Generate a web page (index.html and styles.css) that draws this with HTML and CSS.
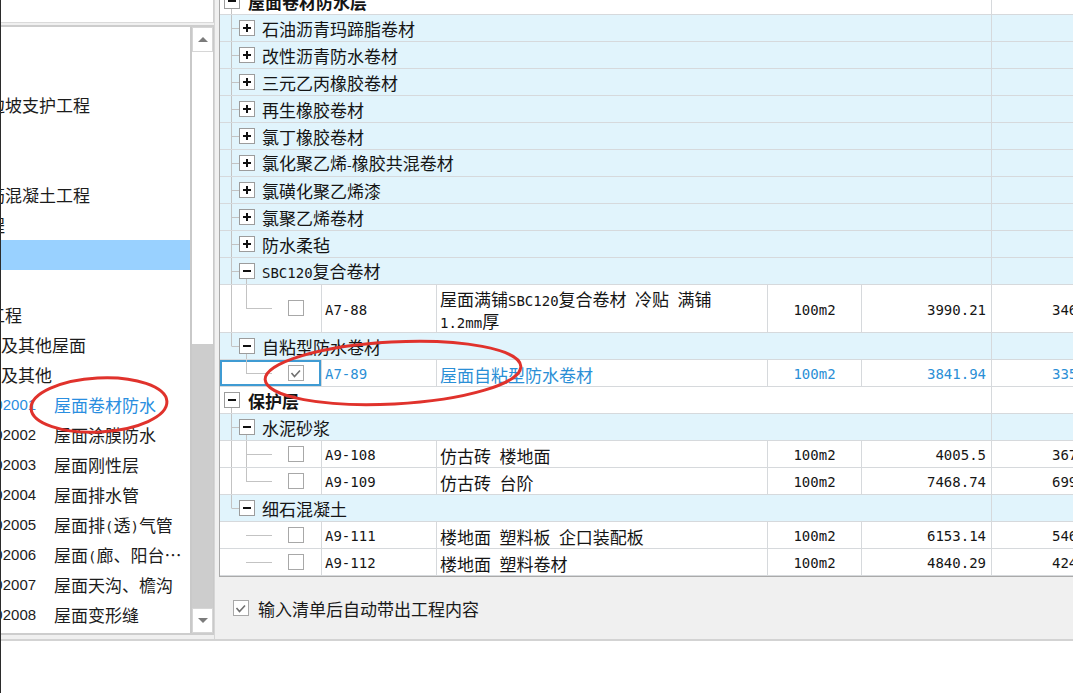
FILE: index.html
```html
<!DOCTYPE html>
<html lang="zh-CN">
<head>
<meta charset="utf-8">
<title>清单</title>
<link rel="stylesheet" href="styles.css">
</head>
<body>
<div class="app">
  <div class="main">
    <aside class="left">
      <div class="topbox"></div>
      <div class="listpanel">
        <div class="list">
          <div class="list-inner">
            <div class="li l0">建筑工程</div>
            <div class="li l1">土石方工程</div>
            <div class="li l1">地基处理与边坡支护工程</div>
            <div class="li l1">桩基工程</div>
            <div class="li l1">砌筑工程</div>
            <div class="li l1">混凝土及钢筋混凝土工程</div>
            <div class="li l1">金属结构工程</div>
            <div class="li l1 hover">木结构工程</div>
            <div class="li l1">门窗工程</div>
            <div class="li l1">屋面及防水工程</div>
            <div class="li l2">瓦、型材及其他屋面</div>
            <div class="li l2">屋面防水及其他</div>
            <div class="li l3 cur"><span class="code">010902001</span><span class="name">屋面卷材防水</span></div>
            <div class="li l3"><span class="code">010902002</span><span class="name">屋面涂膜防水</span></div>
            <div class="li l3"><span class="code">010902003</span><span class="name">屋面刚性层</span></div>
            <div class="li l3"><span class="code">010902004</span><span class="name">屋面排水管</span></div>
            <div class="li l3"><span class="code">010902005</span><span class="name">屋面排<span class="p">(</span>透<span class="p">)</span>气管</span></div>
            <div class="li l3"><span class="code">010902006</span><span class="name">屋面<span class="p">(</span>廊、阳台<span class="p">)</span>泄<span class="p">(</span>吐<span class="p">)</span>水管</span></div>
            <div class="li l3"><span class="code">010902007</span><span class="name">屋面天沟、檐沟</span></div>
            <div class="li l3"><span class="code">010902008</span><span class="name">屋面变形缝</span></div>
          </div>
        </div>
        <div class="vscroll">
          <div class="sb-btn"><span class="tri-up"></span></div>
          <div class="sb-thumb"></div>
          <div class="sb-track"></div>
          <div class="sb-btn"><span class="tri-down"></span></div>
        </div>
      </div>
    </aside>
    <div class="split"></div>
    <section class="right">
      <div class="grid">
        <div class="grid-inner">
          <!-- 屋面卷材防水层 -->
          <div class="row g1">
            <div class="cell-main">
              <svg class="tree" width="28" height="26"><path class="tl" d="M11.5 21V26"/><rect class="bx" x="4.5" y="5.5" width="15" height="15"/><path class="sg" d="M8 13H16"/></svg>
              <span class="label">屋面卷材防水层</span>
            </div>
            <div class="cell-end"></div>
          </div>
          <div class="row g2">
            <div class="cell-main">
              <svg class="tree" width="42" height="26"><path class="tl" d="M11.5 0V26M12 13.5H19"/><rect class="bx" x="19.5" y="5.5" width="15" height="15"/><path class="sg" d="M23 13H31M27 9V17"/></svg>
              <span class="label">石油沥青玛蹄脂卷材</span>
            </div>
            <div class="cell-end"></div>
          </div>
          <div class="row g2">
            <div class="cell-main">
              <svg class="tree" width="42" height="26"><path class="tl" d="M11.5 0V26M12 13.5H19"/><rect class="bx" x="19.5" y="5.5" width="15" height="15"/><path class="sg" d="M23 13H31M27 9V17"/></svg>
              <span class="label">改性沥青防水卷材</span>
            </div>
            <div class="cell-end"></div>
          </div>
          <div class="row g2">
            <div class="cell-main">
              <svg class="tree" width="42" height="26"><path class="tl" d="M11.5 0V26M12 13.5H19"/><rect class="bx" x="19.5" y="5.5" width="15" height="15"/><path class="sg" d="M23 13H31M27 9V17"/></svg>
              <span class="label">三元乙丙橡胶卷材</span>
            </div>
            <div class="cell-end"></div>
          </div>
          <div class="row g2">
            <div class="cell-main">
              <svg class="tree" width="42" height="26"><path class="tl" d="M11.5 0V26M12 13.5H19"/><rect class="bx" x="19.5" y="5.5" width="15" height="15"/><path class="sg" d="M23 13H31M27 9V17"/></svg>
              <span class="label">再生橡胶卷材</span>
            </div>
            <div class="cell-end"></div>
          </div>
          <div class="row g2">
            <div class="cell-main">
              <svg class="tree" width="42" height="26"><path class="tl" d="M11.5 0V26M12 13.5H19"/><rect class="bx" x="19.5" y="5.5" width="15" height="15"/><path class="sg" d="M23 13H31M27 9V17"/></svg>
              <span class="label">氯丁橡胶卷材</span>
            </div>
            <div class="cell-end"></div>
          </div>
          <div class="row g2">
            <div class="cell-main">
              <svg class="tree" width="42" height="26"><path class="tl" d="M11.5 0V26M12 13.5H19"/><rect class="bx" x="19.5" y="5.5" width="15" height="15"/><path class="sg" d="M23 13H31M27 9V17"/></svg>
              <span class="label">氯化聚乙烯<span class="dash">-</span>橡胶共混卷材</span>
            </div>
            <div class="cell-end"></div>
          </div>
          <div class="row g2">
            <div class="cell-main">
              <svg class="tree" width="42" height="26"><path class="tl" d="M11.5 0V26M12 13.5H19"/><rect class="bx" x="19.5" y="5.5" width="15" height="15"/><path class="sg" d="M23 13H31M27 9V17"/></svg>
              <span class="label">氯磺化聚乙烯漆</span>
            </div>
            <div class="cell-end"></div>
          </div>
          <div class="row g2">
            <div class="cell-main">
              <svg class="tree" width="42" height="26"><path class="tl" d="M11.5 0V26M12 13.5H19"/><rect class="bx" x="19.5" y="5.5" width="15" height="15"/><path class="sg" d="M23 13H31M27 9V17"/></svg>
              <span class="label">氯聚乙烯卷材</span>
            </div>
            <div class="cell-end"></div>
          </div>
          <div class="row g2">
            <div class="cell-main">
              <svg class="tree" width="42" height="26"><path class="tl" d="M11.5 0V26M12 13.5H19"/><rect class="bx" x="19.5" y="5.5" width="15" height="15"/><path class="sg" d="M23 13H31M27 9V17"/></svg>
              <span class="label">防水柔毡</span>
            </div>
            <div class="cell-end"></div>
          </div>
          <div class="row g2">
            <div class="cell-main">
              <svg class="tree" width="42" height="26"><path class="tl" d="M11.5 0V26M12 13.5H19M26.5 21V26"/><rect class="bx" x="19.5" y="5.5" width="15" height="15"/><path class="sg" d="M23 13H31"/></svg>
              <span class="label"><span class="a">SBC120</span>复合卷材</span>
            </div>
            <div class="cell-end"></div>
          </div>
          <div class="row leaf tall">
            <div class="c-tree"><svg class="tree" width="101" height="47"><path class="tl" d="M11.5 0V47M26.5 0V23.5M26 23.5H52"/><rect class="ck" x="68.5" y="15.5" width="15" height="15"/></svg></div>
            <div class="c-code"><span class="a">A7-88</span></div>
            <div class="c-desc two">屋面满铺<span class="a">SBC120</span>复合卷材<span class="a"> </span>冷贴<span class="a"> </span>满铺<br><span class="a">1.2mm</span>厚</div>
            <div class="c-unit"><span class="a">100m2</span></div>
            <div class="c-price"><span class="a">3990.21</span></div>
            <div class="c-last"><span class="a">3464.08</span></div>
          </div>
          <div class="row g2">
            <div class="cell-main">
              <svg class="tree" width="42" height="26"><path class="tl" d="M11.5 0V13.5M12 13.5H19M26.5 21V26"/><rect class="bx" x="19.5" y="5.5" width="15" height="15"/><path class="sg" d="M23 13H31"/></svg>
              <span class="label">自粘型防水卷材</span>
            </div>
            <div class="cell-end"></div>
          </div>
          <div class="row leaf sel">
            <div class="c-tree"><svg class="tree" width="101" height="26"><path class="tl" d="M26.5 0V13.5M26 13.5H52"/><rect class="ck" x="68.5" y="5.5" width="15" height="15"/><path class="cm" d="M71.5 13l3 3.5 5.5-6"/></svg></div>
            <div class="c-code"><span class="a">A7-89</span></div>
            <div class="c-desc"><span>屋面自粘型防水卷材</span></div>
            <div class="c-unit"><span class="a">100m2</span></div>
            <div class="c-price"><span class="a">3841.94</span></div>
            <div class="c-last"><span class="a">3357.71</span></div>
          </div>
          <!-- 保护层 -->
          <div class="row g1">
            <div class="cell-main">
              <svg class="tree" width="28" height="26"><path class="tl" d="M11.5 21V26"/><rect class="bx" x="4.5" y="5.5" width="15" height="15"/><path class="sg" d="M8 13H16"/></svg>
              <span class="label">保护层</span>
            </div>
            <div class="cell-end"></div>
          </div>
          <div class="row g2">
            <div class="cell-main">
              <svg class="tree" width="42" height="26"><path class="tl" d="M11.5 0V26M12 13.5H19M26.5 21V26"/><rect class="bx" x="19.5" y="5.5" width="15" height="15"/><path class="sg" d="M23 13H31"/></svg>
              <span class="label">水泥砂浆</span>
            </div>
            <div class="cell-end"></div>
          </div>
          <div class="row leaf">
            <div class="c-tree"><svg class="tree" width="101" height="26"><path class="tl" d="M11.5 0V26M26.5 0V26M26 13.5H52"/><rect class="ck" x="68.5" y="5.5" width="15" height="15"/></svg></div>
            <div class="c-code"><span class="a">A9-108</span></div>
            <div class="c-desc"><span>仿古砖<span class="a"> </span>楼地面</span></div>
            <div class="c-unit"><span class="a">100m2</span></div>
            <div class="c-price"><span class="a">4005.5</span></div>
            <div class="c-last"><span class="a">3671.61</span></div>
          </div>
          <div class="row leaf">
            <div class="c-tree"><svg class="tree" width="101" height="26"><path class="tl" d="M11.5 0V26M26.5 0V13.5M26 13.5H52"/><rect class="ck" x="68.5" y="5.5" width="15" height="15"/></svg></div>
            <div class="c-code"><span class="a">A9-109</span></div>
            <div class="c-desc"><span>仿古砖<span class="a"> </span>台阶</span></div>
            <div class="c-unit"><span class="a">100m2</span></div>
            <div class="c-price"><span class="a">7468.74</span></div>
            <div class="c-last"><span class="a">6993.29</span></div>
          </div>
          <div class="row g2">
            <div class="cell-main">
              <svg class="tree" width="42" height="26"><path class="tl" d="M11.5 0V13.5M12 13.5H19"/><rect class="bx" x="19.5" y="5.5" width="15" height="15"/><path class="sg" d="M23 13H31"/></svg>
              <span class="label">细石混凝土</span>
            </div>
            <div class="cell-end"></div>
          </div>
          <div class="row leaf">
            <div class="c-tree"><svg class="tree" width="101" height="26"><path class="tl" d="M26 13.5H52"/><rect class="ck" x="68.5" y="5.5" width="15" height="15"/></svg></div>
            <div class="c-code"><span class="a">A9-111</span></div>
            <div class="c-desc"><span>楼地面<span class="a"> </span>塑料板<span class="a"> </span>企口装配板</span></div>
            <div class="c-unit"><span class="a">100m2</span></div>
            <div class="c-price"><span class="a">6153.14</span></div>
            <div class="c-last"><span class="a">5461.52</span></div>
          </div>
          <div class="row leaf">
            <div class="c-tree"><svg class="tree" width="101" height="26"><path class="tl" d="M26 13.5H52"/><rect class="ck" x="68.5" y="5.5" width="15" height="15"/></svg></div>
            <div class="c-code"><span class="a">A9-112</span></div>
            <div class="c-desc"><span>楼地面<span class="a"> </span>塑料卷材</span></div>
            <div class="c-unit"><span class="a">100m2</span></div>
            <div class="c-price"><span class="a">4840.29</span></div>
            <div class="c-last"><span class="a">4242.56</span></div>
          </div>
        </div>
      </div>
      <div class="footer">
        <svg class="cb" width="16" height="16"><rect class="ck" x="0.5" y="0.5" width="15" height="15"/><path class="cm" d="M3.5 8l3 3.5 5.5-6"/></svg>
        <span class="footer-text">输入清单后自动带出工程内容</span>
      </div>
    </section>
  </div>
  <div class="bottom"></div>
  <svg class="marks" width="1073" height="693" viewBox="0 0 1073 693">
    <ellipse cx="99" cy="405" rx="68" ry="27" transform="rotate(-3 99 405)"/>
    <ellipse cx="393" cy="373" rx="128" ry="31" transform="rotate(-3 393 373)"/>
  </svg>
</div>
</body>
</html>
```

FILE: styles.css
```css
* { box-sizing: border-box; }
html, body { margin: 0; padding: 0; background: #fff; }
body {
  font-family: "Noto Sans CJK SC", "Noto Sans", sans-serif;
  font-size: 17px;
  color: #151515;
}
.app {
  position: relative;
  width: 1073px;
  height: 693px;
  border-left: 1px solid #2b2b2b;
  display: flex;
  flex-direction: column;
  overflow: hidden;
}
.main {
  height: 641px;
  flex: none;
  display: flex;
  background: #f0f0f0;
  border-bottom: 2px solid #d3d3d3;
}
.bottom { flex: 1; background: #fff; }

/* left tree list */
.left { width: 213px; flex: none; display: flex; flex-direction: column; }
.topbox {
  height: 23px;
  flex: none;
  background: #fff;
  border-bottom: 1px solid #dadada;
  border-right: 1px solid #cfcfcf;
}
.listpanel {
  margin-top: 2px;
  height: 610px;
  flex: none;
  display: flex;
  background: #fff;
  border-top: 2px solid #cdcdcd;
  border-bottom: 2px solid #cdcdcd;
}
.list { flex: 1; min-width: 0; overflow: hidden; padding-top: 3px; }
.list-inner { margin-left: -120px; width: calc(100% + 120px); }
.li {
  height: 30px;
  line-height: 30px;
  white-space: nowrap;
  overflow: hidden;
  color: #1c1c1c;
}
.li.hover { background: #99d1ff; }
.l1 { padding-left: 22px; }
.l2 { padding-left: 52px; }
.l3 { padding-left: 80px; }
.li.cur { color: #2a8ee0; }
.code {
  display: inline-block;
  width: 93px;
  vertical-align: top;
  font-family: "Liberation Sans", Arial, sans-serif;
  font-size: 15px;
}
.name {
  display: inline-block;
  width: 130px;
  vertical-align: top;
  overflow: hidden;
  text-overflow: ellipsis;
  white-space: nowrap;
}
.p { font-family: "DejaVu Sans Mono", monospace; font-size: 14px; }

.vscroll {
  width: 24px;
  flex: none;
  display: flex;
  flex-direction: column;
  background: #cdcdcd;
  border-left: 2px solid #c9c9c9;
  border-right: 1px solid #c9c9c9;
}
.sb-btn {
  height: 25px;
  flex: none;
  background: #fff;
  border: 1px solid #d6d6d6;
  display: flex;
  align-items: center;
  justify-content: center;
}
.sb-thumb { height: 292px; flex: none; background: #fff; }
.sb-track { flex: 1; }
.tri-up, .tri-down {
  width: 0; height: 0;
  border-left: 5px solid transparent;
  border-right: 5px solid transparent;
}
.tri-up { border-bottom: 5px solid #7b7b7b; }
.tri-down { border-top: 5px solid #7b7b7b; }

.split { width: 5px; flex: none; border-left: 1px solid #d6d6d6; }

/* right grid */
.right { flex: 1; min-width: 0; display: flex; flex-direction: column; }
.grid {
  height: 577px;
  flex: none;
  overflow: hidden;
  background: #fff;
  border-left: 1px solid #aaaaaa;
  border-bottom: 1px solid #aaaaaa;
}
.grid-inner { width: 897px; margin-top: -12px; }
.row {
  display: grid;
  grid-template-columns: 102px 115px 331px 94px 130px 125px;
  height: 27px;
  border-bottom: 1px solid #d6d9dc;
}
.row.tall { height: 48px; }
.row > div { border-right: 1px solid #d6d9dc; min-width: 0; overflow: hidden; white-space: nowrap; }
.g2 { background: #e1f4fc; }
.cell-main { grid-column: 1 / 6; display: flex; align-items: center; }
.g1 .label { font-weight: bold; }
.label { line-height: 26px; padding-top: 2px; }
.dash { font-family: "DejaVu Sans", sans-serif; font-size: 13px; }
.tree { display: block; flex: none; }
.tl { stroke: #c3c3c3; stroke-width: 1; fill: none; }
.bx { fill: #fff; stroke: #9c9c9c; stroke-width: 1; }
.sg { stroke: #111; stroke-width: 2; fill: none; }
.ck { fill: #fff; stroke: #a8a8a8; stroke-width: 1; }
.cm { fill: none; stroke: #707070; stroke-width: 1.6; }

.a { font-family: "DejaVu Sans Mono", "Liberation Mono", monospace; font-size: 14px; }

.leaf > div { display: flex; align-items: center; }
.leaf > div:not(.c-tree) { padding-top: 2px; }
.c-code { padding-left: 3px; }
.c-desc { padding-left: 3px; }
.c-desc.two { display: block !important; line-height: 20px; padding-top: 4px !important; white-space: normal; }
.c-unit { justify-content: center; }
.c-price, .c-last { justify-content: flex-end; padding-right: 5px; }
.sel { color: #2b8fd6; }
.sel .c-tree { box-shadow: inset 0 0 0 2px #3f9bd3; }

.footer {
  flex: 1;
  display: flex;
  align-items: center;
  gap: 9px;
  padding-left: 14px;
  color: #1a1a1a;
}
.cb { display: block; flex: none; }

.marks {
  position: absolute;
  left: -1px;
  top: 0;
  pointer-events: none;
}
.marks ellipse { fill: none; stroke: #e0322c; stroke-width: 3; }
```
